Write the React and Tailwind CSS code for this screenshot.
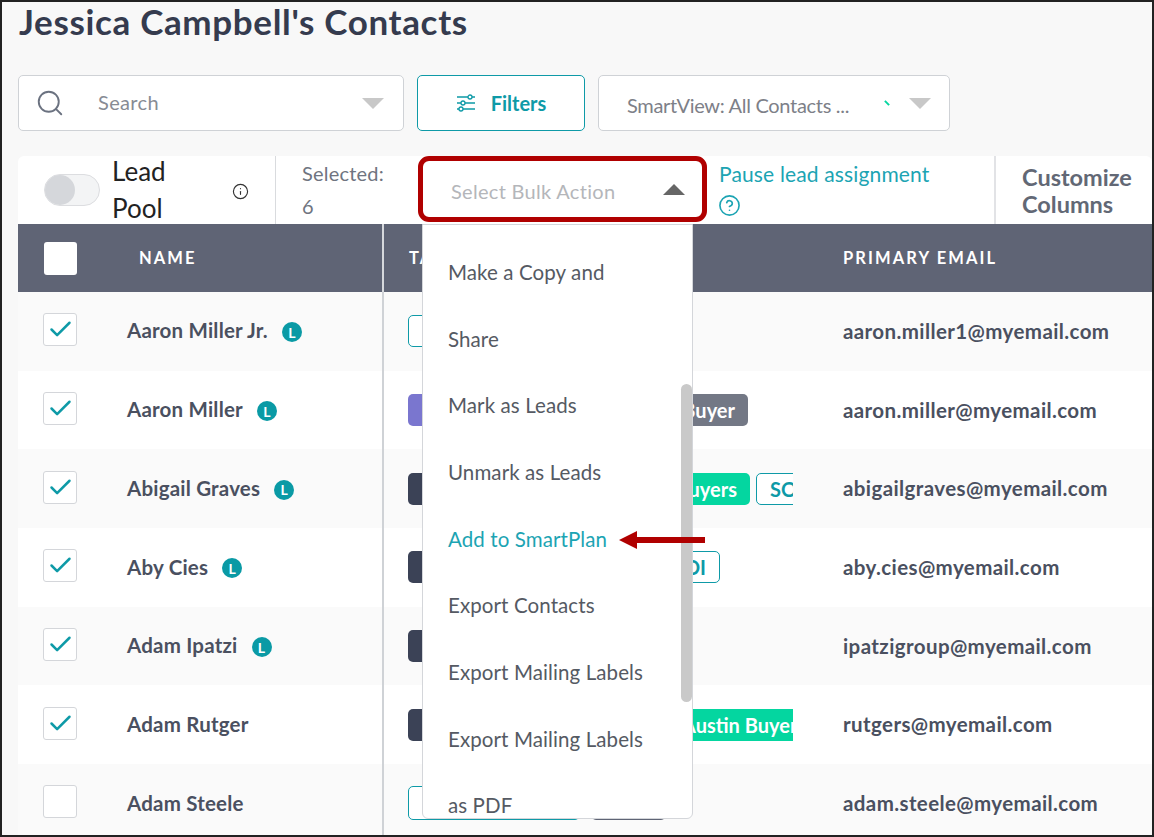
import React from "react";
import { Search, Info, CircleHelp, Check } from "lucide-react";

const Tri = ({ up, cls }) => (
  <svg viewBox="0 0 22 11" className={cls} fill="currentColor">
    <path d={up ? "M11 0 L22 11 L0 11 Z" : "M0 0 L22 0 L11 11 Z"} />
  </svg>
);

const Filt = () => (
  <svg viewBox="0 0 20 20" className="w-5 h-5 text-[#0e9aa7]" fill="none" stroke="currentColor" strokeWidth="1.3">
    <path d="M1 4h11M16 4h3M1 10h4M9 10h10M1 16h2M7 16h12" />
    <circle cx="14" cy="4" r="2" />
    <circle cx="7" cy="10" r="2" />
    <circle cx="5" cy="16" r="2" />
  </svg>
);

const Tag = ({ cls, w, children }) => (
  <span className={`shrink-0 h-[32px] rounded-[5px] flex items-center justify-end pr-[13px] text-[20px] font-bold whitespace-nowrap ${w} ${cls}`}>{children}</span>
);

const dark = "bg-[#3b4256] text-white";
const outline = "border border-[#0e9aa7] bg-white text-[#0e9aa7]";
const green = "bg-[#04d6a0] text-white";

const rows = [
  { n: "Aaron Miller Jr.", l: true, e: "aaron.miller1@myemail.com", c: true, t: <Tag cls={outline} w="w-[120px]" /> },
  { n: "Aaron Miller", l: true, e: "aaron.miller@myemail.com", c: true, t: <><Tag cls="bg-[#7a76cf] text-white" w="w-[190px]" /><Tag cls="bg-[#737885] text-white" w="w-[144px]">Buyer</Tag></> },
  { n: "Abigail Graves", l: true, e: "abigailgraves@myemail.com", c: true, t: <><Tag cls={dark} w="w-[120px]" /><Tag cls={green} w="w-[216px]">Buyers</Tag><Tag cls={`${outline} !justify-start pl-[13px]`} w="w-[80px]">SOI</Tag></> },
  { n: "Aby Cies", l: true, e: "aby.cies@myemail.com", c: true, t: <><Tag cls={dark} w="w-[120px]" /><Tag cls={outline} w="w-[186px]">SOI</Tag></> },
  { n: "Adam Ipatzi", l: true, e: "ipatzigroup@myemail.com", c: true, t: <Tag cls={dark} w="w-[120px]" /> },
  { n: "Adam Rutger", l: false, e: "rutgers@myemail.com", c: true, t: <><Tag cls={dark} w="w-[120px]" /><Tag cls={`${green} !rounded-none !justify-start pl-[148px]`} w="w-[320px]">Austin Buyers</Tag></> },
  { n: "Adam Steele", l: false, e: "adam.steele@myemail.com", c: false, t: <><Tag cls={`${outline} !h-[34px]`} w="w-[172px]" /><Tag cls="ml-[5px] bg-[#5f6475] text-white !h-[34px]" w="w-[75px]" /></> },
];

const menu = ["Make a Copy and", "Share", "Mark as Leads", "Unmark as Leads", "Add to SmartPlan", "Export Contacts", "Export Mailing Labels", "Export Mailing Labels", "as PDF"];

export default function App() {
  return (
    <div className="relative w-[1154px] h-[837px] overflow-hidden border-2 border-[#222] bg-[#f8f8f8] font-['Lato',sans-serif] text-[#3e4457]">
      <div className="pl-4">
        <h1 className="h-[38px] leading-[38px] text-[35px] font-bold tracking-[0.65px] text-[#353b4e] pl-[1px]">Jessica Campbell's Contacts</h1>

        <div className="mt-[35px] flex gap-[13px] h-[56px]">
          <div className="w-[386px] flex items-center bg-white border border-[#cfd2d6] rounded-[5px] pl-[16px] pr-[19px]">
            <Search className="w-[30px] h-[30px] text-[#6b7280]" strokeWidth={1.5} />
            <span className="ml-[33px] -mt-[2px] text-[20px] tracking-[0.35px] text-[#878b94] flex-1">Search</span>
            <Tri cls="w-[22px] h-[11px] text-[#c8c8c8]" />
          </div>
          <div className="w-[168px] flex items-center justify-center gap-[15px] bg-white border border-[#0e9aa7] rounded-[5px]">
            <Filt />
            <span className="text-[20px] font-bold text-[#0e9aa7]">Filters</span>
          </div>
          <div className="w-[352px] flex items-center bg-white border border-[#cfd2d6] rounded-[5px] pl-[28px] pr-[18px]">
            <span className="text-[20px] tracking-[-0.3px] text-[#7d8088] flex-1 pt-[3px]">SmartView: All Contacts ...</span>
            <span className="mr-[19px] w-[6px] h-[2px] rotate-45 bg-[#04d6a0]" />
            <Tri cls="w-[22px] h-[11px] text-[#c8c8c8]" />
          </div>
        </div>

        <div className="mt-[25px] h-[68px] flex bg-white rounded-t-[6px]">
          <div className="w-[258px] flex items-center border-r border-[#d9dbde] pl-[26px]">
            <span className="relative w-[56px] h-[32px] rounded-full bg-[#f3f4f5] border border-[#dcdde0] shrink-0">
              <span className="absolute left-0 top-0 w-[30px] h-[30px] rounded-full bg-[#d5d7db]" />
            </span>
            <span className="ml-[12px] w-[56px] text-[26px] leading-[37px] text-[#222]">Lead Pool</span>
            <Info className="ml-[64px] mt-[2px] w-[17px] h-[17px] text-[#333]" strokeWidth={1.6} />
          </div>
          <div className="w-[142px] pl-[26px] pt-[1px] text-[20px] tracking-[0.2px] leading-[33px] text-[#6f7480]">Selected:<br />6</div>
          <div className="w-[289px] h-[66px] flex items-center border-[5px] border-[#b00000] rounded-[11px] bg-white pl-[28px] pr-[17px]">
            <span className="flex-1 text-[20px] tracking-[0.3px] pt-[3px] text-[#b4b6ba]">Select Bulk Action</span>
            <Tri up cls="w-[22px] h-[11px] text-[#666]" />
          </div>
          <div className="w-[287px] pl-[12px] pt-[1px] text-[#1ca4b3]">
            <div className="text-[21px] tracking-[0.15px] leading-[33px]">Pause lead assignment</div>
            <CircleHelp className="mt-[4px] -ml-[1px] w-[23px] h-[23px]" strokeWidth={1.7} />
          </div>
          <div className="flex-1 border-l-2 border-[#e2e3e6] pl-[26px] pt-[8px] text-[23.5px] leading-[27px] font-bold text-[#626875]">Customize<br />Columns</div>
        </div>

        <div className="h-[68px] flex items-center bg-[#5f6475] text-white text-[16.5px] font-bold tracking-[2.1px]">
          <div className="w-[364px] flex items-center pl-[26px] self-stretch">
            <span className="w-[33px] h-[33px] bg-white rounded-[3px]" />
            <span className="ml-[62px] mt-[1px]">NAME</span>
          </div>
          <div className="w-[461px] self-stretch flex items-center border-l-[2px] border-[#d6d8dc] pl-[25px] pt-[1px]">TAGS</div>
          <div className="mt-[1px]">PRIMARY EMAIL</div>
        </div>

        {rows.map((r, i) => (
          <div key={r.n} className={`h-[78.7px] flex items-center ${i % 2 === 0 ? "bg-[#fafafa]" : "bg-white"}`}>
            <div className="w-[364px] flex items-center pl-[25px]">
              <span className="-mt-[3px] w-[34px] h-[33px] flex items-center justify-center bg-white border border-[#d4d6da] rounded-[3px] text-[#0e9aa7]">
                {r.c && <Check className="w-[27px] h-[27px]" strokeWidth={2.2} />}
              </span>
              <span className="ml-[50px] -mt-[1px] text-[20.5px] tracking-[0.2px] font-bold text-[#4a5060]">{r.n}</span>
              {r.l && <span className="ml-[14px] mt-[2px] w-[20px] h-[20px] rounded-full bg-[#0a9aa5] text-white text-[14px] font-bold flex items-center justify-center">L</span>}
            </div>
            <div className="w-[411px] self-stretch flex items-center gap-[6px] border-l-[2px] border-[#cfd2d6] pl-[24px] pr-0 overflow-hidden">{r.t}</div>
            <div className="ml-[50px] text-[20.5px] tracking-[0.4px] font-bold text-[#4a5060]">{r.e}</div>
          </div>
        ))}
      </div>

      <div className="absolute left-[420px] top-[222px] w-[271px] h-[595px] bg-white border border-[#d4d6da] rounded-b-[6px] overflow-hidden pt-[14px] pl-[25px]">
        {menu.map((m, i) => (
          <div key={i} className={`h-[66.7px] flex items-center text-[20.5px] tracking-[0.1px] ${m === "Add to SmartPlan" ? "text-[#1ca4b3]" : "text-[#555a63]"}`}>{m}</div>
        ))}
        <div className="absolute right-0 top-[159px] w-[11px] h-[318px] rounded-full bg-[#c9c9c9]" />
      </div>

      <svg viewBox="0 0 86 18" className="absolute left-[617px] top-[529px] w-[86px] h-[18px] text-[#b00000]" fill="currentColor">
        <path d="M0 9 L18 0 V6 H86 V12 H18 V18 Z" />
      </svg>
    </div>
  );
}
